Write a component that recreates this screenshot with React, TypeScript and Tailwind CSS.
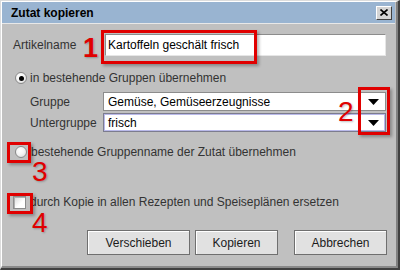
import React from "react";

const font = { fontFamily: '"Liberation Sans", Arial, sans-serif' };

function Arrow() {
  return (
    <svg width="11" height="6" viewBox="0 0 11 6" className="block">
      <polygon points="0,0 11,0 5.5,6" fill="#000" />
    </svg>
  );
}

function Radio({ checked }: { checked?: boolean }) {
  return (
    <div className="w-[12px] h-[12px] rounded-full border border-[#8a8a8a] bg-[radial-gradient(circle_at_40%_35%,#ffffff_0%,#f4f4f4_45%,#d2d2d2_100%)] flex items-center justify-center shrink-0">
      {checked && <div className="w-[5px] h-[5px] rounded-full bg-black" />}
    </div>
  );
}

function Btn({ label, w }: { label: string; w: string }) {
  return (
    <div className={`${w} h-[25px] border border-[#6f6f6f] bg-[#e1e1e1] flex items-center justify-center text-[12px] text-[#1b1b1b] shadow-[inset_1px_1px_0_#ffffff]`}>
      {label}
    </div>
  );
}

function Num({ n, cls }: { n: string; cls: string }) {
  return (
    <span
      className={`absolute text-[#e00000] leading-none ${cls} [text-shadow:1px_1px_2px_rgba(0,0,0,0.25)]`}
      style={font}
    >
      {n}
    </span>
  );
}

function RedBox({ cls }: { cls: string }) {
  return (
    <div
      className={`absolute border-[3px] border-[#e00000] shadow-[2px_2px_3px_rgba(0,0,0,0.3)] ${cls}`}
    />
  );
}

export default function App() {
  return (
    <div
      className="relative w-[400px] h-[270px] bg-[#c0c0c0] border-t border-l border-t-[#dcdcdc] border-l-[#dcdcdc] border-r-2 border-b-2 border-r-[#404040] border-b-[#404040] overflow-hidden"
      style={font}
    >
      <div className="w-full h-full border-t border-l border-t-white border-l-white border-r-2 border-b-2 border-r-[#808080] border-b-[#8a8a8a] flex flex-col">
        {/* Title bar */}
        <div className="h-[22px] mr-[1px] bg-[#99b4d1] flex items-center justify-between pl-[9px] pr-[3px] border-b border-b-[#e8e8e8]">
          <span className="text-[12px] font-bold text-black">Zutat kopieren</span>
          <div className="w-[16px] h-[14px] bg-[#d4d4d4] border-t border-l border-t-white border-l-white border-r border-b border-r-[#404040] border-b-[#404040] flex items-center justify-center">
            <svg width="8" height="7" viewBox="0 0 8 7">
              <path d="M0.5 0.5 L7.5 6.5 M7.5 0.5 L0.5 6.5" stroke="#000" strokeWidth="1.6" />
            </svg>
          </div>
        </div>

        {/* Body */}
        <div className="flex flex-col pl-[11px] text-[12px] text-[#333]">
          {/* Artikelname */}
          <div className="mt-[10px] h-[22px] flex items-center">
            <span className="w-[92px]">Artikelname</span>
            <div className="w-[281px] h-[22px] bg-white border-t border-l border-t-[#8c8c8c] border-l-[#8c8c8c] border-r border-b border-r-[#e6e6e6] border-b-[#e6e6e6] flex items-center pl-[2px] text-black">
              Kartoffeln geschält frisch
            </div>
          </div>

          {/* Radio 1 */}
          <div className="mt-[14px] h-[16px] flex items-center">
            <div className="ml-[2px]">
              <Radio checked />
            </div>
            <span className="ml-[3px]">in bestehende Gruppen übernehmen</span>
          </div>

          {/* Gruppe */}
          <div className="mt-[6px] h-[19px] flex items-center">
            <span className="ml-[17px] w-[73px]">Gruppe</span>
            <div className="w-[283px] h-[19px] bg-white border border-[#8c8c8c] flex items-center justify-between pl-[4px] pr-[6px] text-black">
              <span>Gemüse, Gemüseerzeugnisse</span>
              <Arrow />
            </div>
          </div>

          {/* Untergruppe */}
          <div className="mt-[2px] h-[19px] flex items-center">
            <span className="ml-[17px] w-[73px]">Untergruppe</span>
            <div className="w-[283px] h-[19px] bg-white border border-[#7c7c8e] shadow-[inset_0_0_0_1px_#b9b9ea] flex items-center justify-between pl-[4px] pr-[6px] text-black">
              <span>frisch</span>
              <Arrow />
            </div>
          </div>

          {/* Radio 2 */}
          <div className="mt-[12px] h-[16px] flex items-center">
            <div className="ml-[2px]">
              <Radio />
            </div>
            <span className="ml-[4px]">bestehende Gruppenname der Zutat übernehmen</span>
          </div>

          {/* Checkbox */}
          <div className="mt-[34px] h-[16px] flex items-center">
            <div className="w-[13px] h-[13px] bg-[linear-gradient(135deg,#d8d8d8,#ffffff_60%)] border border-[#8c8c8c] shadow-[inset_1px_1px_0_#b0b0b0]" />
            <span className="ml-[4px]">durch Kopie in allen Rezepten und Speiseplänen ersetzen</span>
          </div>

          {/* Buttons */}
          <div className="mt-[20px] flex items-center ml-[74px]">
            <Btn label="Verschieben" w="w-[103px]" />
            <div className="w-[5px]" />
            <Btn label="Kopieren" w="w-[83px]" />
            <div className="w-[16px]" />
            <Btn label="Abbrechen" w="w-[93px]" />
          </div>
        </div>
      </div>

      {/* Annotations */}
      <RedBox cls="left-[100px] top-[29px] w-[156px] h-[34px]" />
      <Num n="1" cls="left-[82px] top-[34px] text-[27px] font-bold" />
      <RedBox cls="left-[357px] top-[86px] w-[32px] h-[48px]" />
      <Num n="2" cls="left-[337px] top-[97px] text-[28px]" />
      <RedBox cls="left-[6px] top-[141px] w-[24px] h-[21px]" />
      <Num n="3" cls="left-[31px] top-[157px] text-[28px]" />
      <RedBox cls="left-[6px] top-[192px] w-[26px] h-[21px]" />
      <Num n="4" cls="left-[31px] top-[208px] text-[28px]" />
    </div>
  );
}
